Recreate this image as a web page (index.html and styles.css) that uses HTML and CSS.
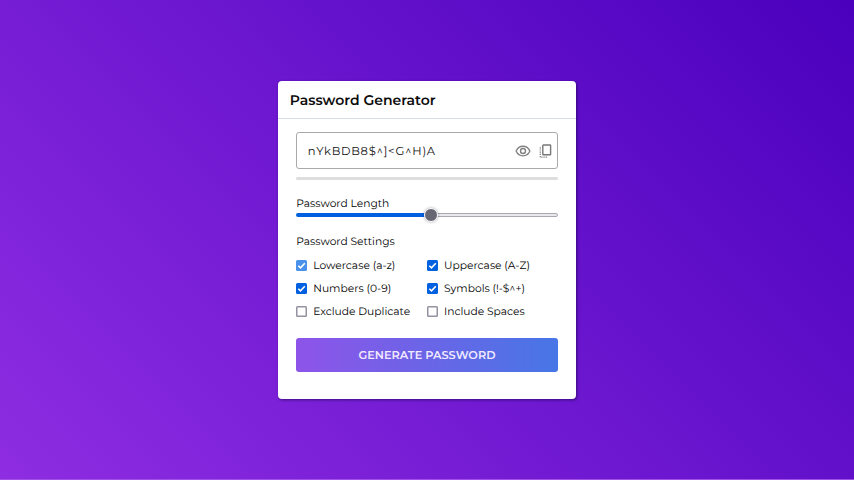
FILE: index.html
```html
<!DOCTYPE html>
<html lang="en">
<head>
<meta charset="utf-8">
<title>Password Generator</title>
<link rel="stylesheet" href="styles.css">
</head>
<body>
<main class="card">
  <header class="card-header"><h1>Password Generator</h1></header>
  <div class="card-body">
    <div class="password-box">
      <span class="password">nYkBDB8$^]&lt;G^H)A</span>
      <svg class="eye" viewBox="0 0 16 12" fill="none" stroke="#808080" stroke-width="1.35"><path d="M1.1 6C2.6 2.7 5 1.2 8 1.2S13.400 2.7 14.900 6C13.400 9.300 11 10.800 8 10.800S2.600 9.300 1.100 6Z"/><circle cx="8" cy="6" r="2.500"/></svg>
      <svg class="copy" viewBox="0 0 13 14" fill="none" stroke="#777"><rect x="3.800" y="1" width="7.800" height="9.800" rx=".6" stroke-width="1.400"/><path d="M1.300 3.200V13.200H9" stroke-width="1.200" stroke-dasharray="1.200 1"/></svg>
    </div>
    <div class="strength"></div>
    <div class="label length-label">Password Length</div>
    <div class="slider"><div class="fill"></div><div class="thumb"></div><div class="rest"></div></div>
    <div class="label settings-label">Password Settings</div>
    <div class="options">
      <div class="option"><span class="check on soft"><svg viewBox="0 0 11 11"><path d="M2.300 5.700 4.500 7.900 8.800 3.200"/></svg></span><span>Lowercase (a-z)</span></div>
      <div class="option"><span class="check on"><svg viewBox="0 0 11 11"><path d="M2.300 5.700 4.500 7.900 8.800 3.200"/></svg></span><span>Uppercase (A-Z)</span></div>
      <div class="option"><span class="check on"><svg viewBox="0 0 11 11"><path d="M2.300 5.700 4.500 7.900 8.800 3.200"/></svg></span><span>Numbers (0-9)</span></div>
      <div class="option"><span class="check on"><svg viewBox="0 0 11 11"><path d="M2.300 5.700 4.500 7.900 8.800 3.200"/></svg></span><span>Symbols (!-$^+)</span></div>
      <div class="option"><span class="check"></span><span>Exclude Duplicate</span></div>
      <div class="option"><span class="check"></span><span>Include Spaces</span></div>
    </div>
    <button class="generate">GENERATE PASSWORD</button>
  </div>
</main>
</body>
</html>
```
FILE: styles.css
```css
* { box-sizing: border-box; }
body {
  margin: 0;
  height: 480px;
  display: flex;
  align-items: center;
  justify-content: center;
  font-family: Montserrat, Inter, sans-serif;
  font-size: 10.700px;
  text-rendering: geometricPrecision;
  color: #000;
  overflow: hidden;
  white-space: nowrap;
  border-bottom: 1px solid #a050e6;
  background: linear-gradient(45deg, #8e2de2, #4a00bd);
}
.card {
  width: 298.500px;
  height: 318.500px;
  margin-top: 1px;
  background: #fff;
  border-radius: 4px;
  box-shadow: 1px 1px 3px rgba(20, 0, 70, .6);
}
.card-header { height: 38px; padding-left: 12px; border-bottom: 1px solid #d6dde6; }
h1 { margin: 0; font-size: 14px; line-height: 38px; font-weight: 600; color: #0c0c0c; }
.card-body { padding: 13px 18.500px 0; }
.password-box {
  height: 37.500px;
  display: flex;
  align-items: center;
  padding: 0 5px 0 10.500px;
  border: 1px solid #a9a9a9;
  border-radius: 3px;
}
.password { font-size: 11.500px; letter-spacing: .7px; padding-top: 1px; margin-right: auto; color: #111; }
.eye { width: 16px; height: 12px; margin-right: 8px; }
.copy { width: 13px; height: 14px; }
.strength { height: 3px; margin-top: 8px; border-radius: 2px; background: #dedede; }
.label { line-height: 16px; }
.length-label { margin-top: 15.500px; }
.slider { height: 12px; margin-top: -2.500px; display: flex; align-items: center; }
.fill { width: 129.500px; height: 4px; background: #0060df; border-radius: 2px 0 0 2px; }
.thumb {
  width: 14px;
  height: 14px;
  margin: 0 -2px;
  border: 1px solid #fff;
  border-radius: 50%;
  background: #676774;
  box-shadow: 0 0 3px rgba(0, 0, 0, .35);
  z-index: 1;
}
.rest { flex: 1; height: 4px; background: #e9e9ed; border: 1px solid #a8a8b2; border-radius: 0 2px 2px 0; }
.settings-label { margin-top: 12.500px; }
.options { display: grid; grid-template-columns: 1fr 1fr; grid-auto-rows: 23.300px; margin-top: 4px; }
.option { display: flex; align-items: center; gap: 6px; }
.check { width: 11px; height: 11px; border-radius: 1.500px; box-shadow: inset 0 0 0 1.500px #9393a0; flex: none; }
.check.on { box-shadow: none; background: #0060df; }
.check.soft { background: #4a91ec; }
.check svg { display: block; width: 100%; height: 100%; fill: none; stroke: #fff; stroke-width: 1.600; }
.generate {
  display: block;
  width: 100%;
  height: 33.500px;
  margin-top: 14.500px;
  padding: 0;
  border: 0;
  border-radius: 3px;
  background: linear-gradient(to right, #8e54e9, #4776e6);
  color: #f1eaff;
  font: 600 11.300px Montserrat, Inter, sans-serif;
  text-rendering: geometricPrecision;
}
```
